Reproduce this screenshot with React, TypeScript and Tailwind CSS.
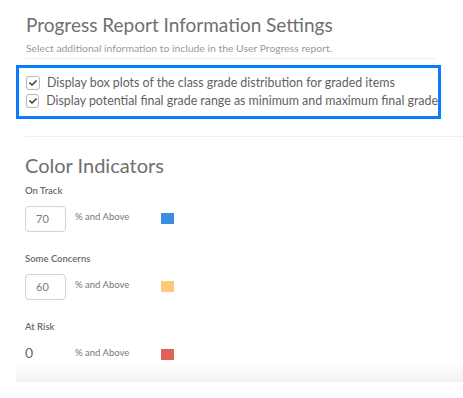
import { FaCheck } from "react-icons/fa";

interface CheckRowProps {
    label: string
};

function CheckRow({ label }: CheckRowProps) {
    return (
        <div className="h-[18px] flex flex-row items-center">
            <div className="w-[14px] h-[14px] rounded-[3px] border border-[#b9b9b9] bg-white flex items-center justify-center text-[#3a3a3a] text-[8px]">
                <FaCheck />
            </div>
            <div className="ml-[7px] text-[12.4px] text-[#5f5f5f] whitespace-nowrap">{label}</div>
        </div>
    );
}

interface IndicatorProps {
    label: string
    value: string
    color: string
    boxed: boolean
};

function Indicator({ label, value, color, boxed }: IndicatorProps) {
    return (
        <div className="flex flex-col">
            <div className="h-[12px] leading-[12px] text-[9.5px] font-semibold text-[#6a6a6a]">{label}</div>
            <div className="mt-[9px] h-[26px] flex flex-row items-start">
                {boxed ? (
                    <div className="w-[41px] h-[26px] rounded-[4px] border border-[#d2d2d2] flex items-center pl-[10px] text-[11px] text-[#7a7a7a]">{value}</div>
                ) : (
                    <div className="w-[41px] h-[26px] pt-[3px] leading-[16px] text-[14px] text-[#6a6a6a]">{value}</div>
                )}
                <div className="ml-[9px] mt-[4px] w-[57px] text-[9.5px] text-[#777] whitespace-nowrap">% and Above</div>
                <div className={"ml-[29px] mt-[7px] w-[13px] h-[11px] " + color}></div>
            </div>
        </div>
    );
}

export default function App() {
    return (
        <div className="w-[463px] h-[398px] bg-white overflow-hidden font-['Lato',sans-serif]">
            <div className="ml-4 w-[447px] h-[382px] flex flex-col bg-gradient-to-b from-white from-[95%] to-[#f1f1f1]">
                <div className="pl-[10px] pt-[12px] text-[19px] leading-[26px] text-[#6f6f6f]">Progress Report Information Settings</div>
                <div className="pl-[10px] mt-[4px] text-[10.4px] leading-[12px] text-[#9a9a9a]">Select additional information to include in the User Progress report.</div>
                <div className="ml-[9px] w-[410px] mt-[4px] border-b border-[#eeeeee]"></div>
                <div className="mt-[6px] w-[425px] h-[54px] border-[3px] border-[#0b7cff] pl-[7px] pt-[6px] flex flex-col">
                    <CheckRow label="Display box plots of the class grade distribution for graded items" />
                    <CheckRow label="Display potential final grade range as minimum and maximum final grade" />
                </div>
                <div className="ml-[9px] mt-[17px] border-b border-[#eeeeee]"></div>
                <div className="pl-[9px] mt-[15px] flex flex-col">
                    <div className="text-[20px] leading-[26px] text-[#6f6f6f]">Color Indicators</div>
                    <div className="mt-[7px] flex flex-col gap-[21px]">
                        <Indicator label="On Track" value="70" color="bg-[#3b8de0]" boxed={true} />
                        <Indicator label="Some Concerns" value="60" color="bg-[#fdc97b]" boxed={true} />
                        <Indicator label="At Risk" value="0" color="bg-[#e0605a]" boxed={false} />
                    </div>
                </div>
            </div>
        </div>
    );
}
